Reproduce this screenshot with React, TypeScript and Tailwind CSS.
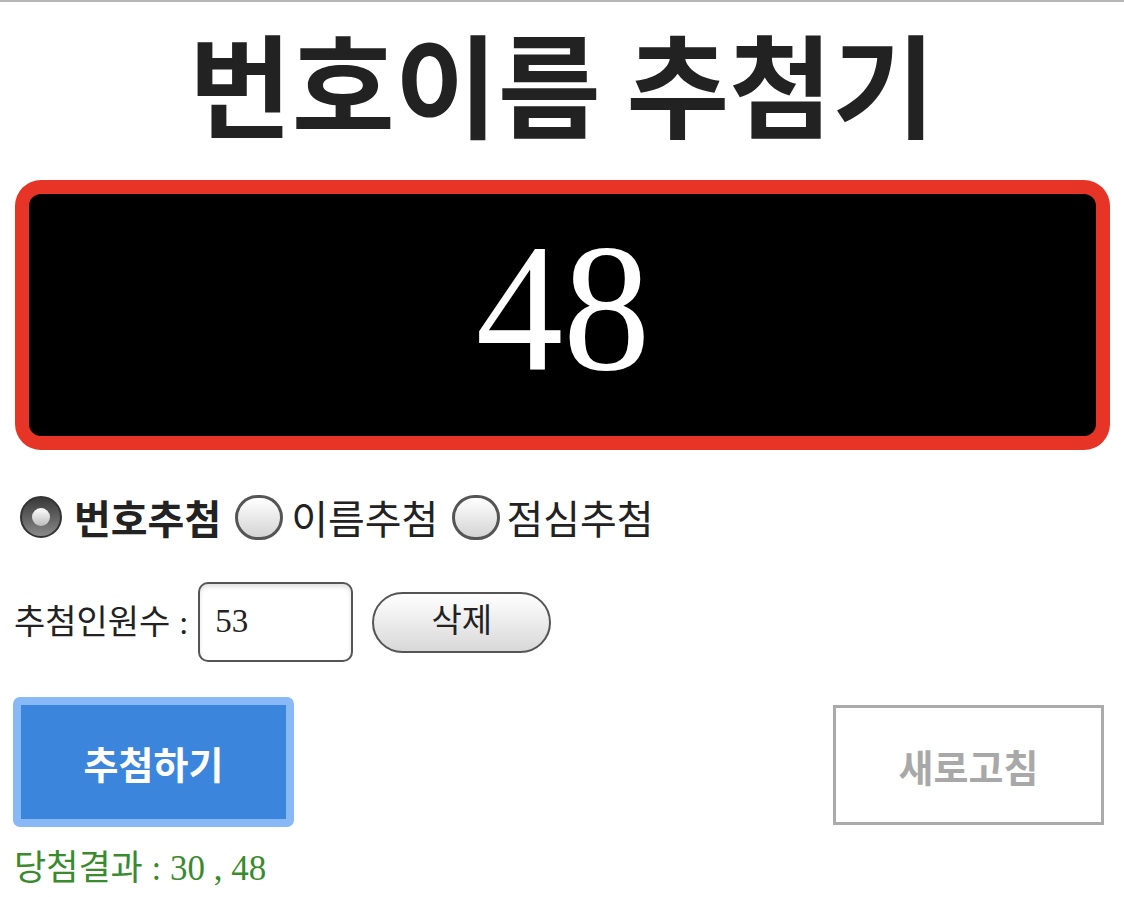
import React from "react";

const serifKr = { fontFamily: '"Liberation Serif", "Noto Sans CJK KR", serif' };

function Radio({ checked }: { checked?: boolean }) {
  if (checked) {
    return (
      <span className="inline-flex h-[42px] w-[42px] shrink-0 items-center justify-center rounded-full border-2 border-[#333] bg-gradient-to-b from-[#3a3a3a] to-[#8a8a8a]">
        <span className="h-[18px] w-[18px] rounded-full bg-gradient-to-b from-[#ffffff] to-[#bdbdbd]" />
      </span>
    );
  }
  return (
    <span className="inline-block h-[45px] w-[48px] shrink-0 rounded-full border-[3px] border-[#555] bg-gradient-to-b from-[#ffffff] to-[#d4d4d4]" />
  );
}

export default function App() {
  return (
    <div className="w-[1124px] h-[897px] overflow-hidden bg-white border-t-2 border-[#b5b5b5]" style={{ fontFamily: '"Noto Sans CJK KR", sans-serif' }}>
      <div className="h-[178px] flex justify-center">
        <h1 className="-mt-[2px] text-center text-[112px] font-bold leading-[1.45] text-[#222] whitespace-nowrap">
          번호이름 추첨기
        </h1>
      </div>
      <div className="mx-[15px] w-[1095px] h-[270px] rounded-[26px] bg-[#e63426] p-[14px]">
        <div className="h-full w-full rounded-[12px] bg-black flex items-center justify-center">
          <span className="text-white text-[182px] leading-none scale-x-[0.96] pb-[14px]" style={{ fontFamily: '"Liberation Serif", serif' }}>48</span>
        </div>
      </div>
      <div className="mt-[42px] ml-[20px] flex items-center h-[50px] text-[40px] text-[#222]">
        <Radio checked />
        <span className="ml-[12px] font-bold">번호추첨</span>
        <span className="ml-[14px] flex"><Radio /></span>
        <span className="ml-[8px]">이름추첨</span>
        <span className="ml-[14px] flex"><Radio /></span>
        <span className="ml-[6px]">점심추첨</span>
      </div>
      <div className="mt-[40px] ml-[14px] flex items-center h-[80px] text-[34px] text-[#222]">
        <span style={serifKr}>추첨인원수 :</span>
        <div className="ml-[10px] w-[155px] h-[80px] rounded-[10px] border-2 border-[#555] flex items-center pl-[15px] shadow-[inset_0_3px_4px_rgba(0,0,0,0.12)]">
          <span style={serifKr} className="text-[33px]">53</span>
        </div>
        <div className="ml-[19px] w-[179px] h-[61px] rounded-full border-2 border-[#555] bg-gradient-to-b from-[#ffffff] to-[#d8d8d8] flex items-center justify-center">
          <span style={serifKr} className="text-[33px]">삭제</span>
        </div>
      </div>
      <div className="mt-[35px] flex items-start justify-between pl-[13px] pr-[20px]">
        <div className="w-[281px] h-[130px] rounded-[7px] bg-[#89b8f7] p-[8px]">
          <div className="h-full w-full bg-[#3b86dc] flex items-center justify-center">
            <span className="text-white text-[38px] font-bold">추첨하기</span>
          </div>
        </div>
        <div className="mt-[8px] w-[271px] h-[120px] border-[3px] border-[#aaaaaa] flex items-center justify-center">
          <span className="text-[#a8a8a8] text-[38px] font-bold">새로고침</span>
        </div>
      </div>
      <div className="mt-[24px] ml-[14px] text-[35px] text-[#3a8a2e] leading-none" style={serifKr}>
        당첨결과 : 30 , 48
      </div>
    </div>
  );
}
